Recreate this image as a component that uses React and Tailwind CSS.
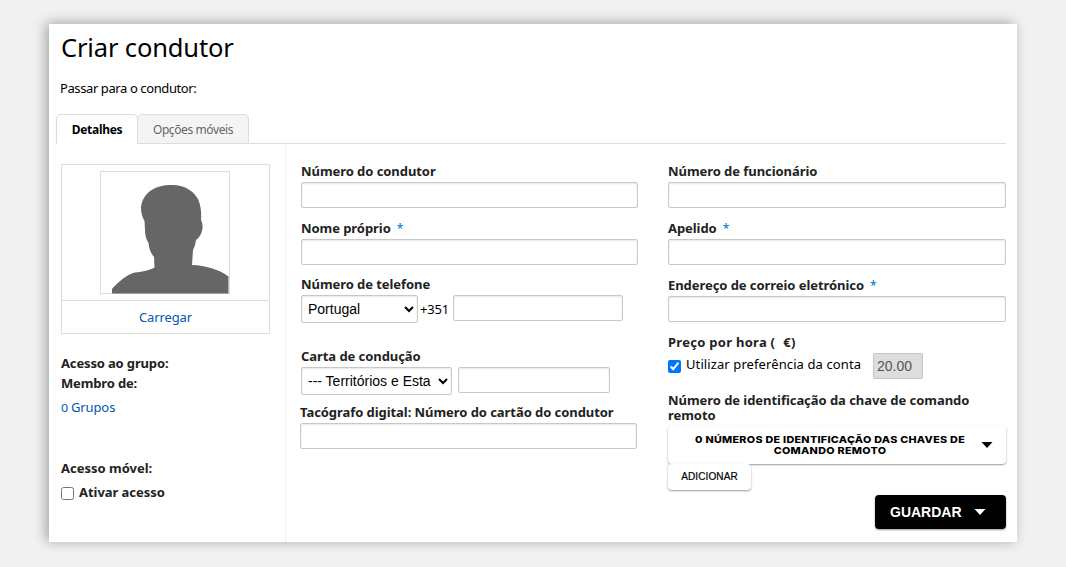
import { useState } from "react";

export default function App() {
  const [tab, setTab] = useState("detalhes");
  const [formData, setFormData] = useState({ country: "PT", territory: "all", useAccount: true, mobileAccess: false });

  const handleChange = (e) => {
    const { name, value, type, checked } = e.target;
    setFormData((prev) => ({ ...prev, [name]: type === "checkbox" ? checked : value }));
  };

  return (
    <div className="h-[567px] w-[1066px] overflow-hidden bg-[#f1f1f1] pt-6 pl-[49px] font-['Noto_Sans',sans-serif] text-[#222]">
      <main className="flex h-[518px] w-[968px] flex-col bg-white shadow-[-3px_-1px_12px_rgba(0,0,0,0.33)]">
        <h1 className="mt-[6px] ml-3 h-[34px] text-[25.5px] leading-[34px] tracking-[-0.15px] whitespace-nowrap text-black">
          Criar condutor
        </h1>
        <p className="mt-[14px] ml-[11px] h-5 text-[13px] leading-5 tracking-[-0.4px] text-black">Passar para o condutor:</p>

        {/* Tabs */}
        <div className="mt-4 mr-[11px] ml-[7px] flex h-[30px] shrink-0 text-[12px]">
          <Tab active={tab === "detalhes"} onClick={() => setTab("detalhes")} className="w-[82px]">
            Detalhes
          </Tab>
          <Tab active={tab === "moveis"} onClick={() => setTab("moveis")} className="-ml-px w-[112px]">
            Opções móveis
          </Tab>
          <div className="flex-1 border-b border-[#ddd]" />
        </div>

        <div className="flex flex-1">
          <aside className="w-[237px] border-r border-[#f0f0f0] pt-5 pl-3">
            <div className="h-[170px] w-[209px] border border-[#ddd]">
              <div className="flex h-[136px] justify-center border-b border-[#ddd] pt-[6px] pr-px">
                <Avatar />
              </div>
              <a href="#" className="block text-center text-[13px] leading-8 tracking-[-0.1px] text-[#0058b0]">
                Carregar
              </a>
            </div>
            <div className="mt-[19px] text-[13px] leading-5 font-bold tracking-[-0.15px]">
              <p>Acesso ao grupo:</p>
              <p>Membro de:</p>
            </div>
            <a href="#" className="mt-1 block h-5 text-[13px] leading-5 tracking-[-0.1px] text-[#0058b0]">
              <span className="mr-px inline-block origin-left scale-x-[1.25] text-[10px] leading-none">0</span> Grupos
            </a>
            <p className="mt-[41px] text-[13px] leading-5 font-bold">Acesso móvel:</p>
            <label className="mt-1 flex items-center text-[13px] leading-5 font-bold tracking-[-0.05px]">
              <input
                type="checkbox"
                name="mobileAccess"
                checked={formData.mobileAccess}
                onChange={handleChange}
                className="mt-[2px] mr-[5px] size-[13px]"
              />
              Ativar acesso
            </label>
          </aside>

          <section className="ml-[15px] w-[337px] pt-[17px]">
            <Field label="Número do condutor" className="h-[57px]" />
            <Field label="Nome próprio" required className="h-14" />
            <div className="h-[72px]">
              <Label>Número de telefone</Label>
              <div className="flex items-start">
                <select name="country" value={formData.country} onChange={handleChange} className={`${selectClass} w-[117px]`}>
                  <option value="PT">Portugal</option>
                </select>
                <span className="ml-[2px] w-[33px] text-[13px] leading-7 tracking-[-0.2px] text-black">+351</span>
                <input className={`${inputClass} w-[170px]`} />
              </div>
            </div>
            <div className="h-14">
              <Label>Carta de condução</Label>
              <div className="flex items-start gap-[6px]">
                <select name="territory" value={formData.territory} onChange={handleChange} className={`${selectClass} w-[151px]`}>
                  <option value="all">--- Territórios e Esta</option>
                </select>
                <input className={`${inputClass} w-[152px]`} />
              </div>
            </div>
            <Field label="Tacógrafo digital: Número do cartão do condutor" className="-ml-px w-[337px]" />
          </section>

          <section className="ml-[30px] w-[338px] pt-[17px]">
            <Field label="Número de funcionário" className="h-[57px]" />
            <Field label="Apelido" required className="h-[57px]" />
            <Field label="Endereço de correio eletrónico" required className="h-[57px]" />
            <Label>
              <span className="tracking-[0.28px]">
                Preço por hora (<span className="ml-[8px]">€)</span>
              </span>
            </Label>
            <div className="flex h-[26px] items-start">
              <label className="flex w-[205px] text-[13px] leading-[22px] tracking-[0.1px] whitespace-nowrap text-black">
                <input
                  type="checkbox"
                  name="useAccount"
                  checked={formData.useAccount}
                  onChange={handleChange}
                  className="mt-[7px] mr-[5px] size-[13px]"
                />
                Utilizar preferência da conta
              </label>
              <input
                disabled
                value="20.00"
                readOnly
                className="h-[26px] w-[50px] rounded-[2px] border border-[#c4c4c4] bg-[#ddd] px-[3px] font-['Liberation_Sans',Arial,sans-serif] text-[14px] text-[#555]"
              />
            </div>
            <p className="mt-[14px] h-[33px] text-[13px] leading-[15px] font-bold tracking-[-0.05px]">
              Número de identificação da chave de comando remoto
            </p>
            <button className="flex h-[38px] w-[338px] items-center rounded-[4px] bg-white pr-[13px] pl-[14px] shadow-[0_1px_2px_rgba(0,0,0,0.4)]">
              <span className="flex-1 -ml-[3px] scale-x-[1.15] font-['Inter',sans-serif] text-[9.4px] leading-[11px] font-extrabold tracking-[0.25px] text-black">
                0 NÚMEROS DE IDENTIFICAÇÃO DAS CHAVES DE
                <br />
                COMANDO REMOTO
              </span>
              <Caret className="text-black" />
            </button>
            <button className="relative block h-[26px] w-[83px] rounded-[4px] bg-white pb-[2px] font-['Liberation_Sans',Arial,sans-serif] text-[10px] tracking-[0.1px] text-black shadow-[0_1px_2px_rgba(0,0,0,0.4)] [-webkit-text-stroke:0.2px_black]">
              ADICIONAR
            </button>
            <button className="mt-[5px] ml-auto flex h-[34px] w-[131px] items-center rounded-[4px] bg-black pl-[15px] font-['Liberation_Sans',Arial,sans-serif] text-[14px] font-bold text-white shadow-[0_1px_2px_rgba(0,0,0,0.4)]">
              GUARDAR
              <Caret className="ml-3" />
            </button>
          </section>
        </div>
      </main>
    </div>
  );
}

const inputClass = "block h-[26px] rounded-[2px] border border-[#c8c8c8] bg-white px-1 shadow-[inset_0_1px_2px_rgba(0,0,0,0.1)]";
const selectClass =
  "h-7 rounded-[2px] border border-[#c8c8c8] bg-white px-[2px] font-['Liberation_Sans',Arial,sans-serif] text-[14px] text-black shadow-[inset_0_1px_2px_rgba(0,0,0,0.1)]";

function Label({ children }) {
  return <div className="h-[21px] text-[13px] leading-5 font-bold tracking-[-0.06px] whitespace-nowrap">{children}</div>;
}

function Field({ label, required, className }) {
  return (
    <div className={className}>
      <Label>
        {label}
        {required && <span className="ml-[6px] text-[12px] font-medium text-[#0082d2]">*</span>}
      </Label>
      <input className={`${inputClass} w-full`} />
    </div>
  );
}

function Tab({ active, onClick, className, children }) {
  return (
    <button
      onClick={onClick}
      className={`rounded-t-[5px] border border-[#ddd] pt-[2px] whitespace-nowrap ${
        active ? "border-b-white bg-white font-bold tracking-[-0.3px] text-black" : "bg-[#f4f4f4] tracking-[-0.4px] text-[#666]"
      } ${className}`}
    >
      {children}
    </button>
  );
}

function Caret({ className }) {
  return (
    <svg width="12" height="6" viewBox="0 0 12 6" fill="currentColor" className={className}>
      <path d="M0.5 0h11L6 6z" />
    </svg>
  );
}

function Avatar() {
  return (
    <svg width="130" height="124" viewBox="0 0 130 124">
      <rect x="0.5" y="0.5" width="129" height="122" fill="#fff" stroke="#ddd" />
      <path
        fill="#666"
        d="M12 122.5V118C19 110 28 103 35 101.500C43 101 50 99 54.500 96.500L54 86C50 81 49 77 48.500 72C46 68 45 64 45 59L44.500 50C42 46 41 41 41 36C43 22 54 14 72 14C86 14 94 21 98 28C101 35 101.500 42 101 49C104 54 103 64 96 69C95 75 94 77 93 79L92 94C106 94.500 118 98 128.500 105.500V122.500Z"
      />
    </svg>
  );
}
